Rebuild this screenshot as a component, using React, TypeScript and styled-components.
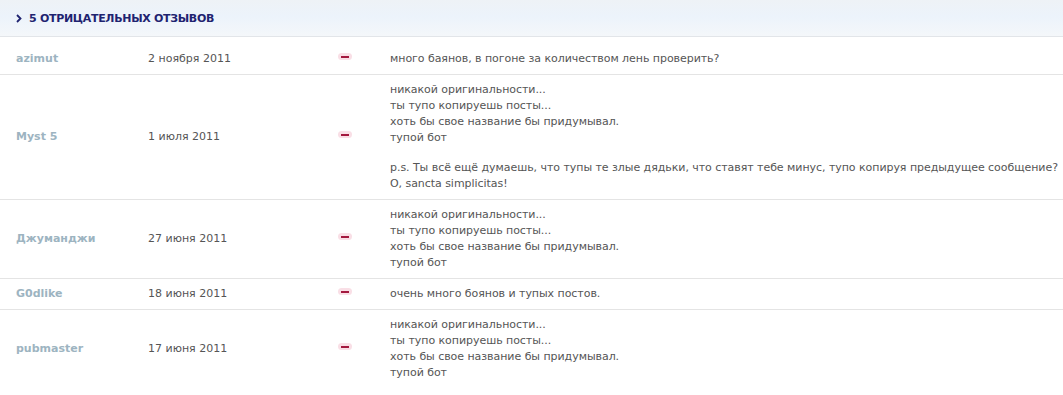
import styled, { createGlobalStyle } from "styled-components";

const GlobalStyle = createGlobalStyle`
  body {
    margin: 0;
    background: #ffffff;
    font-family: Tahoma, "DejaVu Sans", Verdana, sans-serif;
  }
`;

const Wrapper = styled.div`
  width: 1063px;
  background-color: #ffffff;
`;

const Header = styled.div`
  height: 37px;
  display: flex;
  align-items: center;
  gap: 7px;
  padding: 1px 0 0 16px;
  box-sizing: border-box;
  background: linear-gradient(#eef2f6, #ecf3fb 45%, #f4f7fa);
  border-bottom: 1px solid #e2e5e9;
`;

const Title = styled.h3`
  margin: 0;
  font-size: 11px;
  font-weight: bold;
  letter-spacing: -0.3px;
  color: #1f2370;
  text-transform: uppercase;
`;

const List = styled.div`
  padding-top: 8px;
`;

const Row = styled.div`
  display: grid;
  grid-template-columns: 132px 190px 52px 1fr;
  align-items: center;
  padding: 7px 0 7px 16px;
  border-bottom: 1px solid #e4e4e4;
  font-size: 11px;
  line-height: 16px;
  &:first-child {
    padding-top: 6px;
  }
  &:last-child {
    border-bottom: none;
  }
`;

const Name = styled.a`
  font-weight: bold;
  color: #9db4c1;
  text-decoration: none;
`;

const DateCell = styled.span`
  color: #555555;
`;

const MinusCell = styled.div`
  display: flex;
  align-items: center;
  margin-top: -5px;
`;

const Minus = styled.span`
  width: 14px;
  height: 7px;
  border-radius: 4px;
  background: #f9dfe6;
  display: flex;
  align-items: center;
  justify-content: center;
  &::after {
    content: "";
    width: 8px;
    height: 2px;
    background: #a3193f;
  }
`;

const Comment = styled.div`
  color: #555555;
  white-space: pre;
  letter-spacing: -0.05px;
`;

const Gap = styled.div`
  height: 14px;
`;

const Chevron = () => (
  <svg width="6" height="9" viewBox="0 0 6 9">
    <path d="M1 1 L4.5 4.5 L1 8" fill="none" stroke="#1f2370" strokeWidth="1.8" />
  </svg>
);

const BOT =
  "никакой оригинальности...\nты тупо копируешь посты...\nхоть бы свое название бы придумывал.\nтупой бот";

const reviews = [
  { name: "azimut", date: "2 ноября 2011", text: "много баянов, в погоне за количеством лень проверить?" },
  {
    name: "Myst 5",
    date: "1 июля 2011",
    text: BOT,
    ps: "p.s. Ты всё ещё думаешь, что тупы те злые дядьки, что ставят тебе минус, тупо копируя предыдущее сообщение?\nO, sancta simplicitas!",
  },
  { name: "Джуманджи", date: "27 июня 2011", text: BOT },
  { name: "G0dlike", date: "18 июня 2011", text: "очень много боянов и тупых постов." },
  { name: "pubmaster", date: "17 июня 2011", text: BOT },
];

function App() {
  return (
    <Wrapper>
      <GlobalStyle />
      <Header>
        <Chevron />
        <Title>5 отрицательных отзывов</Title>
      </Header>
      <List>
        {reviews.map((r) => (
          <Row key={r.name}>
            <Name href="#">{r.name}</Name>
            <DateCell>{r.date}</DateCell>
            <MinusCell>
              <Minus />
            </MinusCell>
            <Comment>
              {r.text}
              {r.ps && (
                <>
                  <Gap />
                  {r.ps}
                </>
              )}
            </Comment>
          </Row>
        ))}
      </List>
    </Wrapper>
  );
}

export default App;
